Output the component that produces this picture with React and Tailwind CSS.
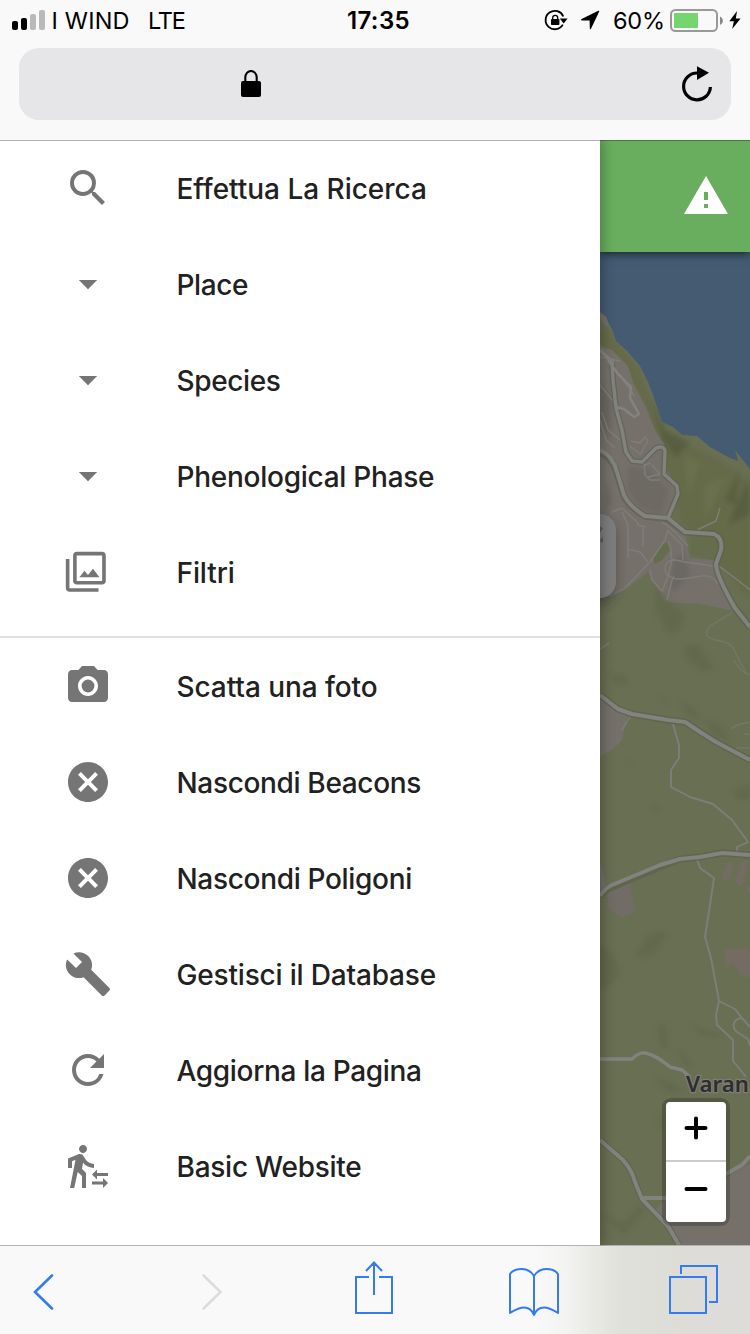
import React from 'react';
import {
  MdSearch,
  MdFilter,
  MdPhotoCamera,
  MdCancel,
  MdBuild,
  MdRefresh,
  MdTransferWithinAStation,
  MdWarning,
} from 'react-icons/md';

function DropDown() {
  return (
    <svg viewBox="0 0 24 24" className="size-12" fill="currentColor">
      <path d="M7.41 10l4.59 4.58 4.59-4.58z" />
    </svg>
  );
}

const searchItems = [
  { label: 'Effettua La Ricerca', icon: <MdSearch className="size-12" />, text: 'tracking-[-0.03px]' },
  { label: 'Place', icon: <DropDown />, text: 'tracking-[-0.4px]' },
  { label: 'Species', icon: <DropDown />, text: 'tracking-[-0.38px]' },
  { label: 'Phenological Phase', icon: <DropDown />, text: 'tracking-[-0.26px]' },
  { label: 'Filtri', icon: <MdFilter className="size-[43.6px]" />, text: 'tracking-[-0.1px]' },
];

const actionItems = [
  { label: 'Scatta una foto', icon: <MdPhotoCamera className="size-12" />, text: 'tracking-[-0.08px]' },
  { label: 'Nascondi Beacons', icon: <MdCancel className="size-12" />, text: 'tracking-[-0.34px]' },
  { label: 'Nascondi Poligoni', icon: <MdCancel className="size-12" />, text: 'tracking-[-0.32px]' },
  { label: 'Gestisci il Database', icon: <MdBuild className="size-12" />, text: 'tracking-[-0.18px]' },
  { label: 'Aggiorna la Pagina', icon: <MdRefresh className="size-12" />, text: 'tracking-[-0.33px]' },
  { label: 'Basic Website', icon: <MdTransferWithinAStation className="size-12" />, text: 'tracking-[-0.25px]' },
];

function MenuItem({ item }) {
  return (
    <li className="flex h-24 items-center pl-16">
      <span className="flex h-12 w-[112.5px] items-center text-[#757575]">{item.icon}</span>
      <span className={`pt-px text-[28px] leading-none font-medium whitespace-nowrap text-[#212121] ${item.text}`}>
        {item.label}
      </span>
    </li>
  );
}

function StatusBar() {
  return (
    <div className="grid h-10 grid-cols-[345px_67px_338px] items-center text-black">
      <div className="flex items-center pl-3">
        <svg className="h-5 w-[33px]" viewBox="0 0 33 20">
          <rect x="0" y="11" width="6" height="9" rx="2" />
          <rect x="9" y="8" width="6" height="12" rx="2" />
          <rect x="18" y="4" width="6" height="16" rx="2" fill="#b9b9b9" />
          <rect x="27" y="0" width="6" height="20" rx="2" fill="#b9b9b9" />
        </svg>
        <span className="ml-[6.5px] w-[96.5px] pt-0.5 text-[23.5px] leading-none tracking-[0.2px] whitespace-nowrap">I WIND</span>
        <span className="pt-0.5 text-[23.5px] leading-none tracking-[-1.2px]">LTE</span>
      </div>
      <div className="pt-0.5 text-center text-[24px] leading-none font-semibold tracking-[0.4px]">17:35</div>
      <div className="flex items-center pl-[132px]">
        <svg className="h-6 w-6 shrink-0" viewBox="544 8 24 24">
          <path d="M563.3 16.5A9.2 9.2 0 1 0 562.8 24.6" fill="none" stroke="#000" strokeWidth="1.8" />
          <path d="M559.8 18.6h7.8l-3.9 4.8z" />
          <rect x="551" y="19" width="8.4" height="6" rx="0.8" />
          <path d="M552.7 19.5v-1.7a2.5 2.5 0 0 1 5 0v1.7" fill="none" stroke="#000" strokeWidth="1.3" />
        </svg>
        <svg className="ml-[13px] h-5 w-[19px] shrink-0" viewBox="0 0 19 20">
          <path d="M18.2 1.6c.3-.7-.2-1.1-.9-.8L.6 9.1c-.8.4-.7 1.2.2 1.3l7.8.1.2 8c.1.9.8 1 1.2.2z" />
        </svg>
        <span className="ml-[13px] w-[57px] pt-0.5 text-[23.5px] leading-none tracking-[-0.2px]">60%</span>
        <svg className="h-6 w-[54px] shrink-0" viewBox="670 8 54 24">
          <rect x="671" y="10" width="46" height="21" rx="4.5" fill="none" stroke="#999" strokeWidth="2" />
          <rect x="674" y="13" width="24" height="15" fill="#75d66f" />
          <path d="M720 16.4c3.8 1.4 3.8 7 0 8.4z" fill="#888" />
        </svg>
        <svg className="ml-[5px] h-5 w-3 shrink-0" viewBox="0 0 12 20">
          <path d="M8 1L.3 11.3h4.6L3.2 19 11.6 8.6H6.8z" />
        </svg>
      </div>
    </div>
  );
}

function BrowserHeader() {
  return (
    <header className="relative z-20 -mb-px h-[141px] shrink-0 border-b border-black/30 bg-[#f9f9f9] bg-clip-padding">
      <StatusBar />
      <div className="mt-2 mr-[19px] ml-[19px] flex h-[72px] items-center rounded-[20px] bg-[#e6e6e8]">
        <svg className="ml-[221px] h-7 w-[22px]" viewBox="240 70 22 28">
          <rect x="241" y="81" width="20" height="16" rx="2" />
          <path d="M245.3 82v-4.5a5.7 6.5 0 0 1 11.4 0V82" fill="none" stroke="#000" strokeWidth="2.1" />
        </svg>
        <svg className="ml-[419px] h-9 w-8 shrink-0" viewBox="681 66 32 36">
          <path d="M710.4 87a13.4 13.4 0 1 1-13.4-14" fill="none" stroke="#000" strokeWidth="3.2" />
          <path d="M697 66.2L709 72.7 697 80z" />
        </svg>
      </div>
    </header>
  );
}

function TerrainMap() {
  return (
    <svg className="block h-[993px] w-[150px]" viewBox="600 252 150 993" preserveAspectRatio="none">
      <defs>
        <filter id="soft" x="-20%" y="-20%" width="140%" height="140%">
          <feGaussianBlur stdDeviation="2.5" />
        </filter>
        <filter id="cardShadow" x="-80%" y="-50%" width="260%" height="200%">
          <feGaussianBlur stdDeviation="6" />
        </filter>
        <clipPath id="land">
          <path d="M600 312L606 316 608 322 612 329 616 341 628 352 640 366 648 382 654 398 662 422 673 427 682 435 697 436 710 447 730 458 738 461 735 450 742 459 750 469V1245H600z" />
        </clipPath>
      </defs>
      <rect x="600" y="252" width="150" height="993" fill="#445b72" />
      <g clipPath="url(#land)">
        <rect x="600" y="300" width="150" height="945" fill="#696f53" />
        <g filter="url(#soft)">
          <path d="M600 320L640 370 662 430 690 445 720 460 750 480V600L715 560 680 520 660 440 630 380 600 345z" fill="#656b4a" />
          <path d="M650 395L665 430 690 443 676 458 662 440z" fill="#595f40" />
          <path d="M750 478L738 500 728 525 750 515z M740 470L725 500 735 505z" fill="#595f41" />
          <path d="M684 455L700 462 688 495z M705 485L725 478 705 520z" fill="#6a704d" />
        </g>
        <g fill="#757069">
          <path d="M600 346L612 350 628 366 634 385 645 405 655 430 664 444 667 470 678 486 678 500 671 518 685 532 690 558 715 560 720 575 735 611 700 604 665 602 648 572 625 590 600 597z" />
          <path d="M600 313L606 317 609 324 606 327 600 318z" />
          <path d="M600 696L618 709 628 714 622 740 612 750 600 756z" />
          <path d="M608 893L630 883 635 912 622 918 608 907z" fill="#726c66" />
          <path d="M727 862L734 864 728 882 721 877z M742 861L749 861 742 887 734 882z M745 888L750 885V896z" fill="#726c62" />
          <path d="M725 950L750 948V978L740 975 733 963 725 968z" fill="#746c62" />
          <path d="M655 1210L664 1200 726 1178 750 1163V1245H680L668 1226z" />
          <path d="M600 860L606 886 600 891z" />
        </g>
        <g filter="url(#soft)">
          <path d="M628 467L650 470 668 490 662 515 640 508 628 490z" fill="#6d6963" />
          <path d="M600 380L612 400 610 440 600 430z" fill="#6b6761" />
          <path d="M606 480L612 500 603 520z" fill="#696660" />
          <path d="M673 560L685 552 690 575 670 595z" fill="#6b6864" />
        </g>
        <path d="M653 558L660 545 669 542 670 550 662 560 655 564z M690 537L715 534 718 548 713 560 691 555z" fill="#666d4c" />
        <g fill="#5d6447" opacity=".5" filter="url(#soft)">
          <path d="M655 585L668 600 685 615 680 630 668 635 655 610z" />
          <path d="M684 645L700 645 708 660 715 668 702 672 686 658z" />
          <path d="M680 700L695 710 702 722 688 715z M705 718L720 725 732 742 712 735z" />
          <path d="M660 697L667 698 665 705z M610 675L625 674 628 685 616 684z" />
          <path d="M733 790L750 783V800L736 799z M652 805L660 808 655 812z" />
          <path d="M630 760L633 762 628 765z M648 935L668 930 658 950 635 958 640 948z" />
          <path d="M600 945L615 955 620 975 605 990 600 985z M655 940L640 958 655 955z" />
          <path d="M658 1023L666 1025 668 1050 660 1045z M688 1022L710 1032 725 1034 715 1038 700 1034z" />
          <path d="M678 1048L690 1060 690 1068 682 1062z M655 1078L670 1082 685 1092 668 1092z" />
          <path d="M600 1215L625 1222 640 1205 645 1210 625 1235z M660 1110L665 1130 658 1128z" />
        </g>
      </g>
      <g fill="none" stroke="#7e7e79" strokeWidth="1.4" strokeLinejoin="round">
        <path d="M602 412L608 430 620 440M600 420L606 440 615 448M631 441L640 443 645 437 648 441 640 454 630 446M644 463L645 475 650 480 660 480M652 465L660 474 648 477M645 465L650 463" />
        <path d="M612 512L622 508M622 508L638 523 638 525 646 527M643 527L643 547M622 512L628 525 628 558M628 549L640 552 648 562M600 597L612 595 625 588 650 562 665 540 668 530M660 520L675 532 688 546M668 541L671 550 671 558M668 531L682 545 683 560M650 570L652 580 662 591 668 577 672 560M667 600L672 580 674 576M675 560C660 560 662 580 680 579S710 570 718 584M671 559L685 562 720 567 735 578 750 590M697 530L716 521 720 508" />
        <path d="M600 357L620 361M600 385L614 402M622 378L635 397M600 649L609 643" />
        <path d="M733 612L718 621C702 630 702 638 720 641S733 655 745 670" stroke="#747866" />
        <path d="M631 715L622 730" />
        <path d="M673 724L679 745V758L671 770V787L690 797 713 804 732 820 748 842 737 847V852" strokeWidth="1.9" />
        <path d="M697 859L700 868 714 878 710 905 705 937 711 958 719 1001 716 1015 717 1025 733 1040V1061L746 1077M719 1001L735 1009 742 1018 750 1027M742 1018C732 1019 732 1028 737 1032L748 1039 750 1046" strokeWidth="1.9" />
        <path d="M750 722C738 724 733 726 732 729M750 734H744M750 748H736M734 660C738 668 744 673 750 675" stroke="#747866" />
      </g>
      <g fill="none" stroke="#5b5f4b" strokeLinejoin="round" strokeWidth="7" opacity=".6">
        <path d="M600 453Q613 458 617 474L624 496Q629 507 645 516L668 519 685 532 714 534Q723 538 721 550L716 564Q716 575 735 608L750 627" />
        <path d="M600 695L618 709 632 714 668 720 685 722 716 742 750 760M600 897Q604 890 612 887L660 867 680 859 700 857 722 853 750 855" />
        <path d="M612 364L613 380 616 408 622 430 626 452 632 461 642 462 656 448Q664 445 665 451L664 474 677 486 678 494 668 518" strokeWidth="6" />
        <path d="M600 1140L623 1160Q632 1170 635 1182L642 1199 668 1226 679 1245" strokeWidth="6" />
      </g>
      <g fill="none" stroke="#82827f" strokeLinejoin="round" strokeWidth="3.4">
        <path d="M600 450Q613 456 617 472L624 495Q629 506 645 516L668 518 685 532 714 534Q723 538 721 550L716 564Q716 575 735 608L750 627" strokeWidth="4" />
        <path d="M600 350L612 362 613 380 616 408 622 430 626 452 632 461 642 462 656 448Q664 445 665 451L664 474 677 486 678 494 668 518" />
        <path d="M608 360L618 374 631 387 630 398 639 414 634 417 624 409 616 407" strokeWidth="2.6" />
        <path d="M600 695L618 709 632 714 650 717 668 720 685 722 700 732 716 742 750 760" strokeWidth="4" />
        <path d="M600 896Q604 889 612 885L660 865 680 859 700 857 722 853 750 855" strokeWidth="4" />
        <path d="M600 1059H632Q639 1052 645 1053 656 1055 670 1067L682 1070 690 1077" />
        <path d="M600 1140L623 1160Q632 1170 635 1182L642 1199 668 1226 679 1245" strokeWidth="4" />
        <path d="M642 1198H668M726 1174L742 1165 750 1156" strokeWidth="4" />
      </g>
      <rect x="560" y="520" width="56" height="84" rx="16" fill="#222" opacity=".4" filter="url(#cardShadow)" />
      <rect x="560" y="514" width="56" height="84" rx="16" fill="#7d7d7d" />
      <path d="M600 526l3 2.5-3 4z M600 540l3-3.5v6h-2z" fill="#5c5c5c" />
      <text
        x="686"
        y="1092"
        textLength="63"
        lengthAdjust="spacingAndGlyphs"
        fontFamily="Noto Sans, Open Sans, sans-serif"
        fontWeight="600"
        fontSize="21.5"
        fill="#2e2e2e"
        stroke="#7d7d75"
        strokeWidth="2.5"
        paintOrder="stroke"
      >
        Varan
      </text>
    </svg>
  );
}

function ZoomControl() {
  return (
    <div className="absolute top-[958px] left-[62px] flex w-[68px] flex-col rounded-[9px] border-4 border-black/20 bg-clip-padding">
      <button className="box-border flex h-[60px] items-center justify-center rounded-t-[4px] border-b-2 border-[#ccc] bg-white">
        <svg className="-mt-1.5 size-6" viewBox="0 0 24 24">
          <path d="M2.5 12h19M12 2.5v19" stroke="#000" strokeWidth="4" strokeLinecap="round" />
        </svg>
      </button>
      <button className="flex h-[60px] items-center justify-center rounded-b-[4px] bg-white">
        <svg className="-mt-1.5 size-6" viewBox="0 0 24 24">
          <path d="M2.5 12h19" stroke="#000" strokeWidth="4" strokeLinecap="round" />
        </svg>
      </button>
    </div>
  );
}

function BrowserToolbar() {
  return (
    <footer className="relative z-20 -mt-px flex h-[89px] shrink-0 border-t border-black/30 bg-[linear-gradient(to_right,#f9f9f9_0,#f9f9f9_535px,#f3f3f2_565px,#e9eae5_592px,#dfe0d9_622px,#dddcd8_700px,#dddcd8_750px)] bg-clip-padding pt-4 pl-[31px] text-[#347af0]">
      <svg className="h-14 w-6" viewBox="31 1262 24 56" fill="none" stroke="currentColor" strokeWidth="2.6" strokeLinecap="round">
        <path d="M52 1275.5L35 1292 52 1308.5" />
      </svg>
      <svg className="ml-[145px] h-14 w-6" viewBox="200 1262 24 56" fill="none" stroke="#dcdcdc" strokeWidth="2.6" strokeLinecap="round">
        <path d="M203.5 1275.5L220.5 1292 203.5 1308.5" />
      </svg>
      <svg className="ml-[129px] -mt-0.5 h-[58px] w-[42px]" viewBox="353 1260 42 58" fill="none" stroke="currentColor" strokeWidth="2">
        <path d="M369 1277H356V1313H392V1277H379M374 1295V1263M366 1271L374 1262.5 382 1271" />
      </svg>
      <svg className="ml-[112px] h-14 w-[54px]" viewBox="507 1262 54 56" fill="none" stroke="currentColor" strokeWidth="2" strokeLinejoin="round">
        <path d="M534 1315V1276C531 1271 527 1269 521.5 1269C516 1269 512 1271 510 1274V1313C515 1310 519 1307.5 524 1307.5C529 1307.5 532 1310 534 1315C536 1310 539 1307.5 544 1307.5C549 1307.5 553 1310 558 1313V1274C556 1271 552 1269 546.5 1269C541 1269 537 1271 534 1276" />
      </svg>
      <svg className="ml-[106px] h-14 w-[53px]" viewBox="667 1262 53 56" fill="none" stroke="currentColor" strokeWidth="2">
        <path d="M670 1277H706V1313H670zM681 1274V1266H717V1302H709" />
      </svg>
    </footer>
  );
}

export default function App() {
  return (
    <div className="flex h-[1334px] w-[750px] flex-col overflow-hidden bg-white font-['Inter','Liberation_Sans',sans-serif]">
      <BrowserHeader />
      <main className="flex h-[1106px] shrink-0 overflow-hidden">
        <nav className="relative z-10 w-[600px] shrink-0 bg-white shadow-[0_0_12px_2px_rgba(0,0,0,0.3)]">
          <ul className="pb-4">
            {searchItems.map((item) => (
              <MenuItem key={item.label} item={item} />
            ))}
          </ul>
          <ul className="border-t-2 border-[#e0e0e0]">
            {actionItems.map((item) => (
              <MenuItem key={item.label} item={item} />
            ))}
          </ul>
        </nav>
        <section className="relative w-[150px] shrink-0">
          <div className="relative flex h-28 items-center justify-end bg-[#69ae5e] pr-5 shadow-[0_2px_8px_rgba(0,0,0,0.6)]">
            <MdWarning className="size-12 text-white" />
          </div>
          <TerrainMap />
          <ZoomControl />
        </section>
      </main>
      <BrowserToolbar />
    </div>
  );
}
